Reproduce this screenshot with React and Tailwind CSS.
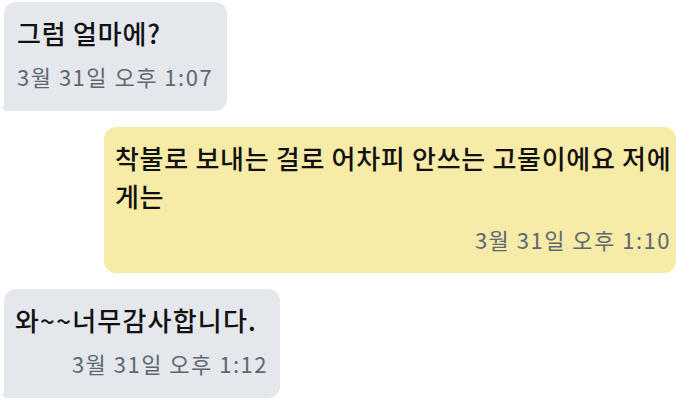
const Tail = ({ color }) => (
  <svg
    className="absolute left-[-4px] bottom-0"
    width="16"
    height="16"
    viewBox="0 0 16 16"
  >
    <path d="M4 0 L4 9 Q4 12 0 13 Q6 15 13 16 L16 16 L16 0 Z" fill={color} />
  </svg>
);

export default function App() {
  return (
    <div
      className="w-[676px] h-[414px] bg-white overflow-hidden flex flex-col gap-[16px] pt-[2px]"
      style={{ fontFamily: '"Noto Sans CJK KR", "Noto Sans", sans-serif' }}
    >
      {/* 받은 메시지 */}
      <div className="relative self-start ml-[4px] w-[223px] rounded-[12px] rounded-bl-none bg-[#e4e7eb] pl-[13px] pr-[12px] pt-[12px] pb-[20px]">
        <p className="text-[26px] leading-[38px] tracking-[0.8px] font-medium text-[#111] whitespace-nowrap">
          그럼 얼마에?
        </p>
        <p className="mt-[9px] text-[22px] leading-[30px] tracking-[1.5px] text-[#5e6873] whitespace-nowrap">
          3월 31일 오후 1:07
        </p>
        <Tail color="#e4e7eb" />
      </div>

      {/* 보낸 메시지 */}
      <div className="self-end w-[572px] rounded-[12px] bg-[#f6eba7] pl-[11px] pr-0 pt-[12px] pb-[19px]">
        <p className="text-[26px] leading-[38px] tracking-[0.7px] font-medium text-[#111]">
          착불로 보내는 걸로 어차피 안쓰는 고물이에요 저에게는
        </p>
        <p className="mt-[9px] mr-[5px] text-right text-[22px] leading-[30px] tracking-[1.5px] text-[#5e6873]">
          3월 31일 오후 1:10
        </p>
      </div>

      {/* 받은 메시지 */}
      <div className="relative self-start ml-[4px] w-[276px] rounded-[12px] rounded-bl-none bg-[#e4e7eb] pl-[11px] pr-[12px] pt-[12px] pb-[20px]">
        <p className="text-[26px] leading-[38px] tracking-[1.2px] font-medium text-[#111] whitespace-nowrap">
          와~~너무감사합니다.
        </p>
        <p className="mt-[9px] text-right text-[22px] leading-[30px] tracking-[1.5px] text-[#5e6873] whitespace-nowrap">
          3월 31일 오후 1:12
        </p>
        <Tail color="#e4e7eb" />
      </div>
    </div>
  );
}
